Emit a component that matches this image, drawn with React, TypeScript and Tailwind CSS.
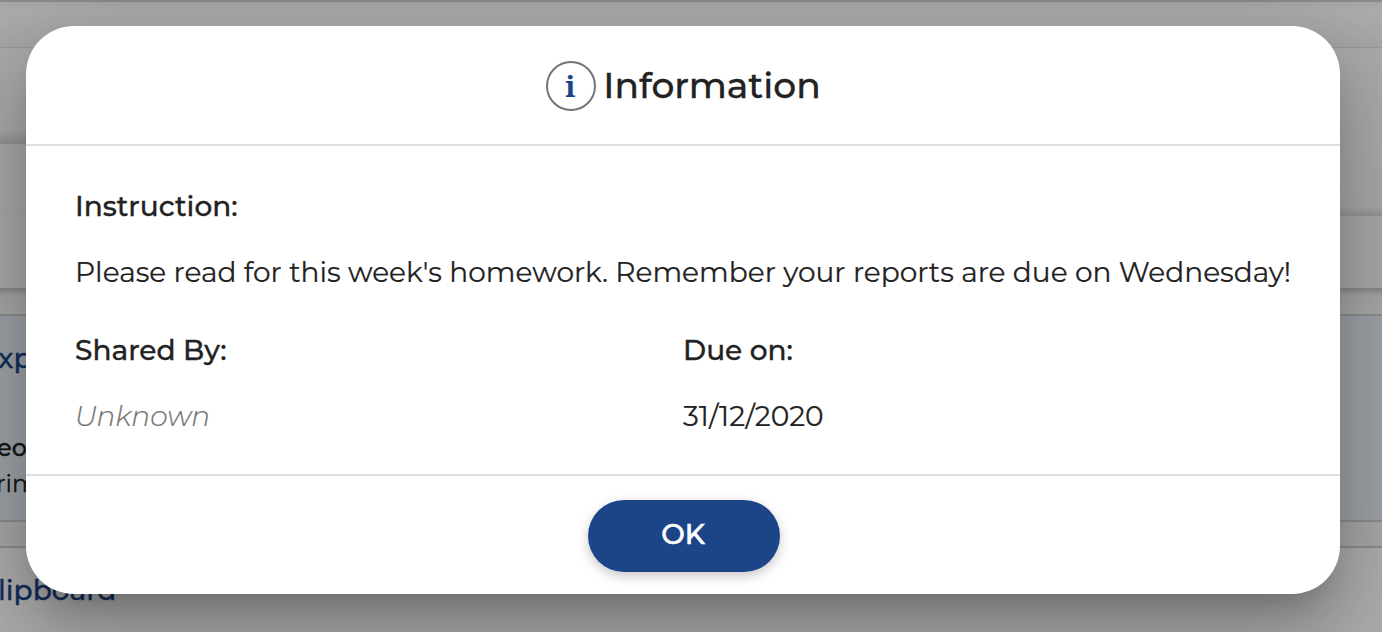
import { type ReactNode } from "react";

type tFieldProps = {
  label: string;
  className?: string;
  children: ReactNode;
};

function Field({ label, className, children }: tFieldProps) {
  return (
    <div className={className}>
      <dt className="h-[66px] font-medium [-webkit-text-stroke:0.3px]">
        {label}
      </dt>
      <dd className="whitespace-nowrap [-webkit-text-stroke:0.2px]">
        {children}
      </dd>
    </div>
  );
}

function Page() {
  return (
    <div className="flex h-full flex-col overflow-hidden bg-white leading-9 whitespace-nowrap">
      <div className="h-0.5 shrink-0 bg-[#cccccc]" />
      <div className="h-[46px] shrink-0 border-b border-[#e4e4e4] bg-linear-to-b from-[#f4f4f4] via-white via-20% to-[#f6f6f6]" />
      <div className="flex h-[168px] shrink-0">
        <div className="flex w-1/2 flex-col">
          <div className="h-24 bg-linear-to-t from-[#d8d8d8] via-[#fafafa] via-15% to-[#fcfcfc]" />
          <div className="grow border-b border-[#f2f2f2] bg-[#fafafa]" />
        </div>
        <div className="w-1/2 bg-linear-to-t from-[#dcdcdc] via-[#fafafa] via-6% to-[#fcfcfc]" />
      </div>
      <div className="h-[72px] shrink-0 bg-[#fafafa]" />
      <div className="h-[26px] shrink-0 bg-linear-to-b from-[#c8c8c8] via-[#f4f4f4] via-30% to-[#fafafa]" />
      <div className="h-52 shrink-0 border-y-2 border-[#d0d0d0] bg-[#e9f1f8] pt-6 text-[#222222] [-webkit-text-stroke:0.3px]">
        <div className="-ml-0.5 text-[28px] leading-9 font-medium text-[#1b4587]">
          xp
        </div>
        <div className="mt-[54px] -ml-[3px] text-2xl leading-9 font-medium">
          eo
        </div>
        <div className="-ml-1 text-2xl leading-9">rim</div>
      </div>
      <div className="h-6 shrink-0 bg-[#f9f7f5]" />
      <div className="-ml-0.5 grow border-t-2 border-[#d0d0d0] bg-white pt-6 text-[28px] leading-9 font-medium text-[#1b4587] [-webkit-text-stroke:0.3px]">
        lipboard
      </div>
    </div>
  );
}

export default function App() {
  return (
    <div className="relative h-[632px] w-[1382px] overflow-hidden font-['Montserrat','Inter',sans-serif] text-[#222222]">
      <Page />
      <div className="absolute inset-0 bg-black/32 pt-[26px] pl-[26px]">
        <div
          role="dialog"
          className="flex h-[568px] w-[1314px] flex-col rounded-[48px] bg-white shadow-[0_22px_30px_-14px_rgba(0,0,0,0.2),0_48px_76px_6px_rgba(0,0,0,0.14),0_18px_92px_16px_rgba(0,0,0,0.12)]"
        >
          <div className="flex h-[120px] shrink-0 items-center justify-center gap-[7px] border-b-2 border-[#e0e0e0] pl-px">
            <span className="mt-0.5 flex size-[50px] items-center justify-center rounded-full border-2 border-[#757575] pr-0.5 pb-0.5 font-['Noto_Serif','Liberation_Serif',serif] text-[29px] leading-none font-bold text-[#1b4587]">
              i
            </span>
            <h2 className="text-4xl leading-none font-medium [-webkit-text-stroke:0.3px]">
              Information
            </h2>
          </div>
          <dl className="h-[328px] px-[49px] pt-[42px] text-[28px] leading-9">
            <Field label="Instruction:">
              Please read for this week's homework. Remember your reports are
              due on Wednesday!
            </Field>
            <div className="mt-[42px] flex">
              <Field label="Shared By:" className="w-[608px]">
                <span className="font-light text-[#757575] italic">
                  Unknown
                </span>
              </Field>
              <Field label="Due on:">31/12/2020</Field>
            </div>
          </dl>
          <div className="flex grow items-start justify-center border-t-2 border-[#e0e0e0] pt-6">
            <button className="ml-0.5 h-[72px] w-48 rounded-full bg-[#1b4587] pr-0.5 pb-1 text-[28px] leading-9 font-medium text-white shadow-[0_4px_12px_rgba(0,0,0,0.22)] [-webkit-text-stroke:0.6px]">
              OK
            </button>
          </div>
        </div>
      </div>
    </div>
  );
}
